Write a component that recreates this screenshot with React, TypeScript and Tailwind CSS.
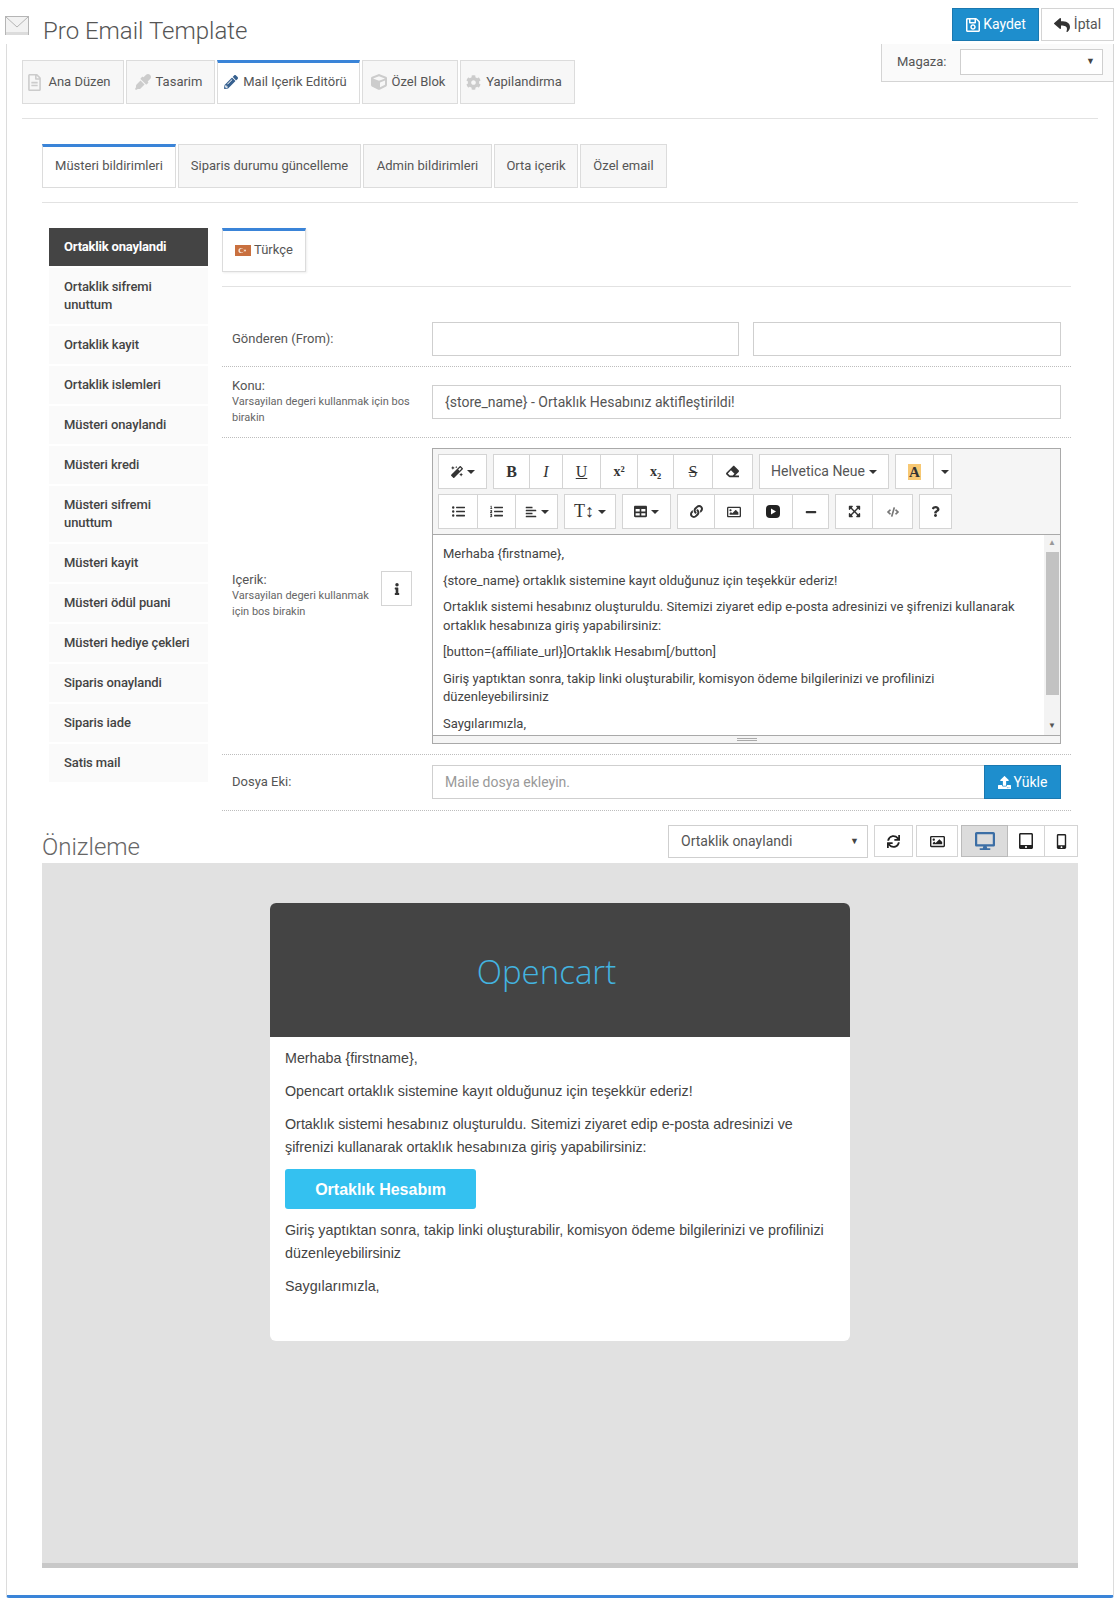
import {
  FaAlignLeft, FaCode, FaCog, FaCube, FaDesktop, FaEraser, FaExpandArrowsAlt, FaEyeDropper, FaInfo,
  FaLink, FaListOl, FaListUl, FaMagic, FaMinus, FaMobileAlt, FaPencilAlt, FaQuestion, FaRegFileAlt, FaRegImage, FaRegSave,
  FaReply, FaSync, FaTable, FaTabletAlt, FaUpload,
} from 'react-icons/fa';
import type { ReactNode } from 'react';

const sideItems = [
  'Ortaklik sifremi unuttum', 'Ortaklik kayit', 'Ortaklik islemleri', 'Müsteri onaylandi', 'Müsteri kredi',
  'Müsteri sifremi unuttum', 'Müsteri kayit', 'Müsteri ödül puani', 'Müsteri hediye çekleri',
  'Siparis onaylandi', 'Siparis iade', 'Satis mail',
];

function Caret() {
  return <span className="ml-[4px] inline-block border-x-[4px] border-t-[4px] border-x-transparent border-t-[#333]" />;
}

function Tab({ active, className, children }: { active?: boolean; className: string; children: ReactNode }) {
  return (
    <div
      className={`flex h-[44px] items-center justify-center border border-[#dcdcdc] text-[13px] text-[#555] ${className} ${
        active ? 'border-t-[3px] border-t-[#3a84d8] bg-white pb-[2px]' : 'bg-[#f7f7f7]'
      }`}
    >
      {children}
    </div>
  );
}

function ToolBtn({ className, children }: { className: string; children: ReactNode }) {
  return (
    <div className={`-ml-px flex h-[35px] items-center justify-center border border-[#d4d4d4] bg-white text-[#333] first:ml-0 ${className}`}>
      {children}
    </div>
  );
}

function Row({ label, hint, className, children }: { label: ReactNode; hint?: ReactNode; className: string; children: ReactNode }) {
  return (
    <div className={`flex items-center border-b border-dotted border-[#bdbdbd] ${className}`}>
      <div className="w-[210px] shrink-0 pl-[10px] pr-[10px] text-[#555]">
        <div className="text-[13px] leading-[16px]">{label}</div>
        {hint && <div className="text-[11px] leading-[16px] text-[#666]">{hint}</div>}
      </div>
      {children}
    </div>
  );
}

export default function App() {
  return (
    <div className="relative h-[1601px] w-[1116px] overflow-hidden bg-white font-['Roboto',sans-serif] text-[#555]">
      {/* header */}
      <div className="flex h-[44px] items-start pl-[5px] pr-[2px]">
        <svg width="24" height="20" viewBox="0 0 24 20" className="mt-[16px]">
          <rect x="0.5" y="0.5" width="23" height="18" fill="#f2f2f2" stroke="#b5b5b5" />
          <path d="M1 1l11 10L23 1" fill="none" stroke="#b5b5b5" />
          <rect x="1" y="16" width="22" height="3" fill="#dcdcdc" />
        </svg>
        <div className="ml-[14px] mt-[15px] text-[24px] font-light leading-[32px] text-[#555]">Pro Email Template</div>
        <div className="ml-auto mt-[8px] flex gap-[2px]">
          <div className="flex h-[33px] w-[87px] items-center justify-center gap-[2px] border border-[#1a78b0] bg-[#1e8ecd] text-[14px] text-white">
            <FaRegSave className="text-[16px]" /> Kaydet
          </div>
          <div className="flex h-[33px] w-[73px] items-center justify-center gap-[4px] border border-[#d4d4d4] bg-white text-[14px]">
            <FaReply className="text-[16px] text-[#333]" /> İptal
          </div>
        </div>
      </div>

      {/* magaza box */}
      <div className="absolute left-[881px] top-[44px] flex h-[38px] w-[233px] items-center border-b border-l border-r border-[#d4d4d4] bg-[#fafafa] pb-[2px] pl-[15px] text-[13px]">
        <span className="w-[63px]">Magaza:</span>
        <div className="flex h-[26px] w-[143px] items-center justify-end border border-[#cfcfcf] bg-white pr-[7px] text-[9px] text-[#444]">▼</div>
      </div>

      <div className="ml-[6px] mr-[2px] h-[1554px] rounded-bl-[3px] rounded-br-[3px] border-x border-b-[3px] border-x-[#dcdcdc] border-b-[#3a84d8] pl-[15px] pr-[15px] pt-[16px]">
        {/* top tabs */}
        <div className="flex gap-[2px]">
          <Tab className="w-[102px] gap-[5px] pr-[9px]"><FaRegFileAlt className="text-[17px] text-[#ccc]" /> Ana Düzen</Tab>
          <Tab className="w-[89px] gap-[5px] pr-[4px]"><FaEyeDropper className="text-[16px] text-[#ccc]" /> Tasarim</Tab>
          <Tab active className="w-[143px] gap-[5px] pr-[6px]"><FaPencilAlt className="text-[14px] text-[#36608f]" /> Mail Içerik Editörü</Tab>
          <Tab className="w-[96px] gap-[5px] pr-[4px]"><FaCube className="text-[16px] text-[#ccc]" /> Özel Blok</Tab>
          <Tab className="w-[115px] gap-[5px] pr-[7px]"><FaCog className="text-[15px] text-[#ccc]" /> Yapilandirma</Tab>
        </div>
        <div className="mt-[14px] h-px bg-[#e2e2e2]" />

        <div className="px-[20px]">
          {/* second tabs */}
          <div className="mt-[25px] flex gap-[2px]">
            <Tab active className="w-[134px]">Müsteri bildirimleri</Tab>
            <Tab className="w-[183px]">Siparis durumu güncelleme</Tab>
            <Tab className="w-[129px]">Admin bildirimleri</Tab>
            <Tab className="w-[84px]">Orta içerik</Tab>
            <Tab className="w-[87px]">Özel email</Tab>
          </div>
          <div className="mt-[14px] h-px bg-[#e2e2e2]" />

          <div className="mt-[25px] flex">
            {/* sidebar */}
            <div className="ml-[7px] flex w-[159px] shrink-0 flex-col gap-[2px] self-start">
              <div className="flex h-[38px] items-center bg-[#444] pl-[15px] text-[13px] font-bold tracking-[-0.2px] text-white">Ortaklik onaylandi</div>
              {sideItems.map((item) => (
                <div key={item} className="bg-[#fafafa] px-[15px] py-[10px] text-[13px] font-medium leading-[18px] tracking-[-0.1px] text-[#444]">
                  {item}
                </div>
              ))}
            </div>

            {/* form */}
            <div className="ml-[14px] w-[849px]">
              <Tab active className="w-[84px] gap-[3px] shadow-[1px_1px_2px_#eee]">
                <svg width="16" height="11" viewBox="0 0 16 11">
                  <rect width="16" height="11" fill="#c9703f" />
                  <circle cx="6" cy="5.5" r="2.6" fill="#f4e2d4" />
                  <circle cx="6.9" cy="5.5" r="2" fill="#c9703f" />
                  <circle cx="10" cy="5.5" r="1" fill="#f4e2d4" />
                </svg>
                Türkçe
              </Tab>
              <div className="mt-[14px] h-px bg-[#e2e2e2]" />

              <Row label="Gönderen (From):" className="h-[80px] pt-[25px]">
                <div className="h-[34px] w-[307px] border border-[#cfcfcf]" />
                <div className="ml-[14px] h-[34px] w-[308px] border border-[#cfcfcf]" />
              </Row>

              <Row label="Konu:" hint="Varsayilan degeri kullanmak için bos birakin" className="h-[71px]">
                <div className="flex h-[34px] w-[629px] items-center border border-[#cfcfcf] pl-[12px] text-[14px] text-[#555]">
                  {'{store_name} - Ortaklık Hesabınız aktifleştirildi!'}
                </div>
              </Row>

              <Row
                label={
                  <div className="flex items-start">
                    <div className="w-[149px]">
                      <div>Içerik:</div>
                      <div className="text-[11px] text-[#666]">Varsayilan degeri kullanmak için bos birakin</div>
                    </div>
                    <div className="-mt-[1px] flex h-[35px] w-[31px] items-center justify-center border border-[#d4d4d4] text-[12px] text-[#333]">
                      <FaInfo />
                    </div>
                  </div>
                }
                className="h-[317px]"
              >
                {/* editor */}
                <div className="h-[296px] w-[629px] border border-[#a9a9a9] text-[13px] text-[#444]">
                  <div className="h-[86px] border-b border-[#a9a9a9] bg-[#f5f5f5] pl-[5px] pt-[5px]">
                    <div className="flex gap-[6px]">
                      <div className="flex">
                        <ToolBtn className="w-[49px] text-[12px]"><FaMagic /><Caret /></ToolBtn>
                      </div>
                      <div className="flex">
                        <ToolBtn className="w-[37px] font-['Liberation_Serif',serif] text-[16px] font-bold">B</ToolBtn>
                        <ToolBtn className="w-[34px] font-['Liberation_Serif',serif] text-[16px] italic">I</ToolBtn>
                        <ToolBtn className="w-[39px] font-['Liberation_Serif',serif] text-[16px] underline">U</ToolBtn>
                        <ToolBtn className="w-[38px] font-['Liberation_Serif',serif] text-[14px] font-bold">x²</ToolBtn>
                        <ToolBtn className="w-[37px] font-['Liberation_Serif',serif] text-[14px] font-bold">x₂</ToolBtn>
                        <ToolBtn className="w-[40px] font-['Liberation_Serif',serif] text-[16px] line-through">S</ToolBtn>
                        <ToolBtn className="w-[41px] text-[13px]"><FaEraser /></ToolBtn>
                      </div>
                      <div className="flex">
                        <ToolBtn className="w-[130px] text-[14px] text-[#555]">Helvetica Neue<Caret /></ToolBtn>
                      </div>
                      <div className="flex">
                        <ToolBtn className="w-[39px]">
                          <span className="bg-[#f7c873] px-[1px] font-['Liberation_Serif',serif] text-[15px] font-bold leading-[16px]">A</span>
                        </ToolBtn>
                        <ToolBtn className="w-[19px]"><Caret /></ToolBtn>
                      </div>
                    </div>
                    <div className="mt-[5px] flex gap-[6px]">
                      <div className="flex">
                        <ToolBtn className="w-[40px] text-[13px]"><FaListUl /></ToolBtn>
                        <ToolBtn className="w-[39px] text-[13px]"><FaListOl /></ToolBtn>
                        <ToolBtn className="w-[43px] text-[12px]"><FaAlignLeft /><Caret /></ToolBtn>
                      </div>
                      <div className="flex">
                        <ToolBtn className="w-[52px] font-['Liberation_Serif',serif] text-[18px]">T↕<Caret /></ToolBtn>
                      </div>
                      <div className="flex">
                        <ToolBtn className="w-[49px] text-[13px]"><FaTable /><Caret /></ToolBtn>
                      </div>
                      <div className="flex">
                        <ToolBtn className="w-[38px] text-[13px]"><FaLink /></ToolBtn>
                        <ToolBtn className="w-[40px] text-[14px]"><FaRegImage /></ToolBtn>
                        <ToolBtn className="w-[40px]">
                          <svg width="14" height="13" viewBox="0 0 14 13">
                            <rect width="14" height="13" rx="4" fill="#222" />
                            <path d="M5 3.5v6l5-3z" fill="#fff" />
                          </svg>
                        </ToolBtn>
                        <ToolBtn className="w-[37px] text-[12px]"><FaMinus /></ToolBtn>
                      </div>
                      <div className="flex">
                        <ToolBtn className="w-[38px] text-[13px]"><FaExpandArrowsAlt /></ToolBtn>
                        <ToolBtn className="w-[41px] text-[12px] text-[#777]"><FaCode /></ToolBtn>
                      </div>
                      <div className="flex">
                        <ToolBtn className="w-[33px] text-[11px]"><FaQuestion /></ToolBtn>
                      </div>
                    </div>
                  </div>
                  <div className="flex h-[201px] border-b border-[#a9a9a9]">
                    <div className="min-w-0 flex-1 overflow-hidden pl-[10px] pr-[20px] pt-[10px] leading-[18.5px]">
                      <p>Merhaba {'{firstname}'},</p>
                      <p className="mt-[8px]">{'{store_name}'} ortaklık sistemine kayıt olduğunuz için teşekkür ederiz!</p>
                      <p className="mt-[8px]">Ortaklık sistemi hesabınız oluşturuldu. Sitemizi ziyaret edip e-posta adresinizi ve şifrenizi kullanarak ortaklık hesabınıza giriş yapabilirsiniz:</p>
                      <p className="mt-[8px]">[button={'{affiliate_url}'}]Ortaklık Hesabım[/button]</p>
                      <p className="mt-[8px]">Giriş yaptıktan sonra, takip linki oluşturabilir, komisyon ödeme bilgilerinizi ve profilinizi düzenleyebilirsiniz</p>
                      <p className="mt-[8px]">Saygılarımızla,</p>
                    </div>
                    <div className="flex w-[16px] shrink-0 flex-col items-center bg-[#f3f3f3] text-[8px] leading-[16px] text-[#999]">
                      <div className="h-[17px]">▲</div>
                      <div className="h-[143px] w-[13px] bg-[#c2c2c2]" />
                      <div className="mt-auto h-[17px] text-[#555]">▼</div>
                    </div>
                  </div>
                  <div className="flex h-[7px] flex-col items-center justify-center gap-px bg-[#f5f5f5]">
                    <div className="h-px w-[20px] bg-[#aaa]" />
                    <div className="h-px w-[20px] bg-[#aaa]" />
                  </div>
                </div>
              </Row>

              <Row label="Dosya Eki:" className="h-[56px] pb-[1px]">
                <div className="flex h-[34px] w-[629px]">
                  <div className="flex flex-1 items-center border border-r-0 border-[#cfcfcf] pl-[12px] text-[14px] text-[#999]">Maile dosya ekleyin.</div>
                  <div className="flex w-[77px] items-center justify-center gap-[3px] border border-[#1a78b0] bg-[#1e8ecd] text-[14px] text-white">
                    <FaUpload className="text-[13px]" /> Yükle
                  </div>
                </div>
              </Row>
            </div>
          </div>

          {/* preview */}
          <div className="mt-[14px] flex h-[33px] items-start justify-between">
            <div className="mt-[6px] text-[24px] font-light leading-[32px] text-[#666]">Önizleme</div>
            <div className="flex">
              <div className="flex h-[33px] w-[200px] items-center justify-between border border-[#cfcfcf] pl-[12px] pr-[8px] text-[14px]">
                Ortaklik onaylandi <span className="text-[9px] text-[#444]">▼</span>
              </div>
              <div className="ml-[6px] flex h-[32px] w-[39px] items-center justify-center border border-[#d4d4d4] text-[13px] text-[#222]"><FaSync /></div>
              <div className="ml-[3px] flex h-[32px] w-[42px] items-center justify-center border border-[#d4d4d4] text-[15px] text-[#222]"><FaRegImage /></div>
              <div className="ml-[3px] flex h-[32px] w-[47px] items-center justify-center border border-[#bbb] bg-[#dcdcdc] text-[20px] text-[#3b6ea5]"><FaDesktop /></div>
              <div className="flex h-[32px] w-[37px] items-center justify-center border border-l-0 border-[#d4d4d4] text-[16px] text-[#222]"><FaTabletAlt /></div>
              <div className="flex h-[32px] w-[33px] items-center justify-center border border-l-0 border-[#d4d4d4] text-[15px] text-[#222]"><FaMobileAlt /></div>
            </div>
          </div>
          <div className="mt-[5px] h-[705px] border-b-[5px] border-[#c8c8c8] bg-[#e1e1e1] pt-[40px]">
            <div className="mx-auto h-[438px] w-[580px] overflow-hidden rounded-[6px] bg-white">
              <div className="flex h-[134px] items-center justify-center bg-[#444] pr-[27px] pt-[4px] font-['Open_Sans',sans-serif] text-[33px] font-light text-[#43b4e0]">
                Opencart
              </div>
              <div className="px-[15px] pt-[10px] font-['Liberation_Sans',sans-serif] text-[14.3px] leading-[23px] text-[#444]">
                <p>Merhaba {'{firstname}'},</p>
                <p className="mt-[10px]">Opencart ortaklık sistemine kayıt olduğunuz için teşekkür ederiz!</p>
                <p className="mt-[10px]">Ortaklık sistemi hesabınız oluşturuldu. Sitemizi ziyaret edip e-posta adresinizi ve şifrenizi kullanarak ortaklık hesabınıza giriş yapabilirsiniz:</p>
                <div className="mt-[10px] flex h-[40px] w-[191px] items-center justify-center rounded-[3px] bg-[#34c1f0] text-[16px] font-bold text-white">Ortaklık Hesabım</div>
                <p className="mt-[10px]">Giriş yaptıktan sonra, takip linki oluşturabilir, komisyon ödeme bilgilerinizi ve profilinizi düzenleyebilirsiniz</p>
                <p className="mt-[10px]">Saygılarımızla,</p>
              </div>
            </div>
          </div>
        </div>
      </div>
    </div>
  );
}
